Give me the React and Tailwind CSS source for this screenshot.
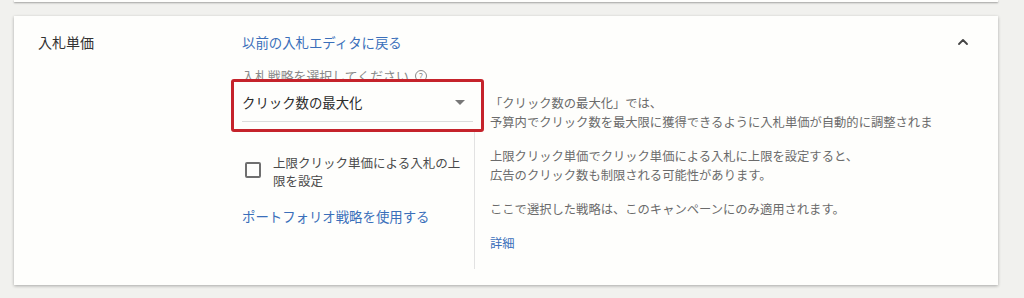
import { ChevronUp } from 'lucide-react';

export default function App() {
    return (
        <div className="w-[1024px] h-[298px] bg-[#f1f1ee] overflow-hidden font-['Noto_Sans_CJK_JP','Noto_Sans',sans-serif]">
            {/* previous card edge */}
            <div className="ml-[14px] w-[984px] h-[2px] bg-[#fefefc] shadow-[0_1px_2px_rgba(0,0,0,0.35)]" />

            {/* Bid card */}
            <div className="mt-[14px] ml-[14px] w-[984px] h-[269px] bg-[#fefefc] shadow-[0_1px_3px_rgba(0,0,0,0.3)] flex pt-4 pl-6">
                <div className="w-[204px] text-[14px] leading-5 text-[#333]">入札単価</div>

                <div className="flex-1 flex flex-col">
                    <a className="text-[13.4px] leading-5 text-[#3a6fba] cursor-pointer">以前の入札エディタに戻る</a>

                    <div className="mt-4 h-4 flex items-center gap-[6px] text-[12.9px] leading-4 text-[#8a8a8a]">
                        <span>入札戦略を選択してください</span>
                        <span className="w-[12px] h-[12px] rounded-full border border-[#8a8a8a] flex items-center justify-center text-[9px] leading-none">?</span>
                    </div>

                    <div className="flex">
                        {/* left sub-column */}
                        <div className="w-[232px] flex flex-col">
                            <div className="relative">
                                <div className="absolute -top-[5px] -left-[11px] -right-[10px] -bottom-[10px] border-[3px] border-[#c5232b] rounded-[3px] bg-[#fefefc]" />
                                <div className="relative h-[38px] mr-[1px] flex items-center justify-between border-b border-[#dcdcdc]">
                                    <span className="text-[13.4px] text-[#2b2b2b]">クリック数の最大化</span>
                                    <span className="mr-[8px] w-0 h-0 border-l-[5px] border-r-[5px] border-t-[5px] border-l-transparent border-r-transparent border-t-[#777]" />
                                </div>
                            </div>

                            <label className="mt-[32px] flex items-start gap-3 cursor-pointer">
                                <span className="ml-[3px] mt-[8px] w-4 h-4 shrink-0 rounded-[2px] border-2 border-[#6f6f6f]" />
                                <span className="w-[190px] text-[12.5px] leading-[18px] text-[#4a4a4a]">上限クリック単価による入札の上限を設定</span>
                            </label>

                            <a className="mt-4 text-[13.4px] leading-5 text-[#3a6fba] cursor-pointer">ポートフォリオ戦略を使用する</a>
                        </div>

                        {/* help column */}
                        <div className="w-[470px] border-l border-[#e2e2e2] pl-[15px] pt-[10px] pb-4 flex flex-col gap-[15px] text-[12.3px] leading-[19px] text-[#6b6b6b]">
                            <p className="whitespace-nowrap">「クリック数の最大化」では、<br />予算内でクリック数を最大限に獲得できるように入札単価が自動的に調整されま</p>
                            <p className="whitespace-nowrap">上限クリック単価でクリック単価による入札に上限を設定すると、<br />広告のクリック数も制限される可能性があります。</p>
                            <p className="whitespace-nowrap">ここで選択した戦略は、このキャンペーンにのみ適用されます。</p>
                            <a className="text-[#3a6fba] cursor-pointer">詳細</a>
                        </div>
                    </div>
                </div>

                <div className="pr-[27px] pt-[2px]">
                    <ChevronUp className="w-4 h-4 text-[#444]" strokeWidth={2.75} />
                </div>
            </div>
        </div>
    );
}
